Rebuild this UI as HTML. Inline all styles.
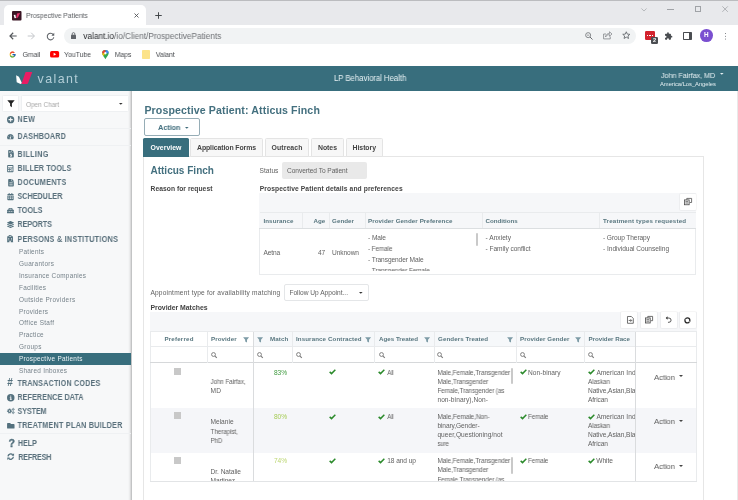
<!DOCTYPE html>
<html lang="en">
<head>
<meta charset="utf-8">
<title>Prospective Patients</title>
<style>
*{box-sizing:border-box;margin:0;padding:0}
html,body{width:738px;height:500px;overflow:hidden;background:#fff}
body{font-family:"Liberation Sans",sans-serif;position:relative;color:#444;font-size:7px}
.a{position:absolute;white-space:nowrap;line-height:1}
.t{will-change:transform}
svg{position:absolute;overflow:visible}
#tabstrip{left:0;top:0;width:738px;height:25px;background:#e8e9ec;border-top:1px solid #bbbcbf}
#tab{left:4px;top:5px;width:142px;height:21px;background:#fff;border-radius:5px 5px 0 0}
#omni{left:64px;top:28px;width:572px;height:16px;background:#f1f3f4;border-radius:8px}
.ct{color:#5f6368;font-size:7.4px;letter-spacing:-.08px;transform:scaleX(.945);transform-origin:0 50%}
</style>
</head>
<body>
<!-- browser chrome -->
<div class="a" id="tabstrip"></div>
<div class="a" id="tab"></div>
<div class="a" id="omni"></div>
<!-- favicon -->
<svg style="left:12px;top:10.5px" width="9.5" height="9.5" viewBox="0 0 20 20"><rect width="20" height="20" rx="2" fill="#3a1524"/><path d="M3.5 8.5 L7 8 L8.5 14.5 L5.5 15.5 Z" fill="#fff"/><path d="M10.5 5 L17 4 L12.5 13.5 L8.8 15 Z" fill="#e6306c"/></svg>
<div class="a t ct" id="tabtitle" style="left:26px;top:11.5px;font-size:7.2px;letter-spacing:-.06px;transform:scaleX(.96);color:#5c5f63">Prospective Patients</div>
<svg style="left:133.5px;top:13px" width="5" height="5" viewBox="0 0 10 10"><path d="M1 1 L9 9 M9 1 L1 9" stroke="#4a4d51" stroke-width="1.7" fill="none"/></svg>
<svg style="left:155px;top:11.5px" width="7" height="7" viewBox="0 0 14 14"><path d="M7 0.5 V13.5 M0.5 7 H13.5" stroke="#3c4043" stroke-width="1.9" fill="none"/></svg>
<!-- window controls -->
<svg style="left:640.5px;top:7.5px" width="6" height="3.6" viewBox="0 0 12 7"><path d="M0.8 0.8 L6 6 L11.2 0.8" stroke="#a5a8ac" stroke-width="1.5" fill="none"/></svg>
<div class="a" style="left:667px;top:8.8px;width:6.5px;height:1px;background:#a0a3a7"></div>
<div class="a" style="left:694.5px;top:6.2px;width:6px;height:5.8px;border:1px solid #a0a3a7"></div>
<svg style="left:721.7px;top:6px" width="6.2" height="6.2" viewBox="0 0 12 12"><path d="M0.7 0.7 L11.3 11.3 M11.3 0.7 L0.7 11.3" stroke="#a0a3a7" stroke-width="1.5" fill="none"/></svg>
<!-- nav buttons -->
<svg style="left:8.8px;top:32px" width="8.4" height="8" viewBox="0 0 16 16"><path d="M15 8 H2 M8 1.5 L1.5 8 L8 14.5" stroke="#55585c" stroke-width="2.3" fill="none"/></svg>
<svg style="left:27.2px;top:32px" width="8.4" height="8" viewBox="0 0 16 16"><path d="M1 8 H14 M8 1.5 L14.5 8 L8 14.5" stroke="#c3c6ca" stroke-width="2" fill="none"/></svg>
<svg style="left:46px;top:31.5px" width="9" height="9" viewBox="0 0 18 18"><path d="M14.5 5.2 A6.6 6.6 0 1 0 15.6 10.5" stroke="#5f6368" stroke-width="2.1" fill="none"/><path d="M16.5 1.5 V7.3 H10.7 Z" fill="#5f6368"/></svg>
<!-- lock -->
<svg style="left:71.3px;top:32px" width="5" height="7" viewBox="0 0 10 14"><rect x="0" y="5.5" width="10" height="8.5" rx="1.2" fill="#5f6368"/><path d="M2.4 6 V3.8 A2.6 2.6 0 0 1 7.6 3.8 V6" stroke="#5f6368" stroke-width="1.7" fill="none"/></svg>
<div class="a t" id="url" style="left:83px;padding-left:.3px;top:32.1px;font-size:8.6px;letter-spacing:-.04px;transform:scaleX(.97);transform-origin:0 50%;color:#6e7175"><span style="color:#2a2c2f">valant.io</span>/io/Client/ProspectivePatients</div>
<!-- omnibox icons -->
<svg style="left:585px;top:31.7px" width="8" height="8" viewBox="0 0 16 16"><circle cx="6.3" cy="6.3" r="5" stroke="#6a6d71" stroke-width="1.6" fill="none"/><path d="M10 10 L15 15" stroke="#6a6d71" stroke-width="2"/><path d="M4 6.3 H8.6" stroke="#6a6d71" stroke-width="1.3"/></svg>
<svg style="left:603px;top:31.3px" width="9.5" height="8.5" viewBox="0 0 19 17"><path d="M6 6 H1.2 V15.8 H14.5 V11" stroke="#7a7d81" stroke-width="1.5" fill="none"/><path d="M5 12 C5.5 7 9 5 13 5 V1.5 L18 6 L13 10.5 V7.3 C9.5 7.3 7 8.5 5 12 Z" stroke="#7a7d81" stroke-width="1.4" fill="none" stroke-linejoin="round"/></svg>
<svg style="left:622.3px;top:31.2px" width="8.6" height="8.4" viewBox="0 0 24 24"><path d="M12 2.2 L14.9 8.9 L22.2 9.5 L16.7 14.3 L18.4 21.4 L12 17.6 L5.6 21.4 L7.3 14.3 L1.8 9.5 L9.1 8.9 Z" stroke="#5f6368" stroke-width="2.4" fill="none" stroke-linejoin="round"/></svg>
<!-- extensions -->
<div class="a" style="left:645px;top:31px;width:10px;height:9.2px;background:#d3232e;border-radius:1.2px"></div>
<div class="a" style="left:647px;top:34.6px;width:6px;height:1.2px;background:repeating-linear-gradient(90deg,#fff 0 1.4px,transparent 1.4px 2.3px)"></div>
<div class="a" style="left:651px;top:36.7px;width:7px;height:7px;background:#4b4e52;border-radius:1.2px;color:#fff;font-size:5.6px;font-weight:bold;text-align:center;line-height:7px;will-change:transform">2</div>
<svg style="left:664px;top:32px" width="9" height="8.4" viewBox="0 0 24 24"><path d="M20.5 11H19V7a2 2 0 0 0-2-2h-4V3.5a2.5 2.5 0 0 0-5 0V5H4a2 2 0 0 0-2 2v3.8h1.5a2.7 2.7 0 0 1 0 5.4H2V20a2 2 0 0 0 2 2h3.8v-1.5a2.7 2.7 0 0 1 5.4 0V22H17a2 2 0 0 0 2-2v-4h1.5a2.5 2.5 0 0 0 0-5z" fill="#4a4d51"/></svg>
<div class="a" style="left:683px;top:32.4px;width:8.8px;height:7.8px;border:1.2px solid #4a4d51;border-right-width:3.6px;border-radius:.8px"></div>
<div class="a" style="left:700px;top:29.3px;width:12.8px;height:12.8px;border-radius:50%;background:#7a4fd0;color:#fff;font-size:6.4px;font-weight:bold;text-align:center;line-height:12.8px;will-change:transform">H</div>
<div class="a" style="left:724.5px;top:32.6px;width:1.6px;height:1.6px;border-radius:50%;background:#5f6368;box-shadow:0 2.7px 0 #5f6368,0 5.4px 0 #5f6368"></div>
<!-- bookmarks -->
<svg style="left:9.3px;top:50.8px" width="7.2" height="7.2" viewBox="0 0 48 48"><path d="M43.6 20.1H42V20H24v8h11.3C33.7 32.7 29.2 36 24 36c-6.6 0-12-5.4-12-12s5.4-12 12-12c3.1 0 5.8 1.2 8 3l5.7-5.7C34 6.1 29.3 4 24 4 13 4 4 13 4 24s9 20 20 20 20-9 20-20c0-1.3-.1-2.7-.4-3.900z" fill="#fbc02d"/><path d="M6.3 14.7l6.6 4.8C14.7 15.100 19 12 24 12c3.100 0 5.8 1.2 8 3l5.7-5.7C34 6.100 29.3 4 24 4 16.3 4 9.7 8.3 6.3 14.7z" fill="#e53935"/><path d="M24 44c5.2 0 9.900-2 13.400-5.2l-6.2-5.2A11.900 11.900 0 0 1 24 36c-5.2 0-9.6-3.3-11.3-7.900l-6.5 5C9.5 39.6 16.2 44 24 44z" fill="#4caf50"/><path d="M43.6 20.100H42V20H24v8h11.3a12 12 0 0 1-4.100 5.6l6.2 5.2C37 39.2 44 34 44 24c0-1.3-.1-2.7-.4-3.900z" fill="#1565c0"/></svg>
<div class="a t ct" id="bm1" style="left:22px;padding-left:.4px;top:50.6px;color:#4a4d51">Gmail</div>
<svg style="left:50px;top:51.4px" width="9.2" height="6.5" viewBox="0 0 28 20"><rect width="28" height="20" rx="5" fill="#f00"/><path d="M11 5.5 L19 10 L11 14.5 Z" fill="#fff"/></svg>
<div class="a t ct" id="bm2" style="left:64px;top:50.6px;color:#4a4d51">YouTube</div>
<svg style="left:101.6px;top:50px" width="6.8" height="9.3" viewBox="0 0 14 20"><path d="M7 0 A7 7 0 0 1 14 7 C14 11.5 9 15 7 20 C5 15 0 11.5 0 7 A7 7 0 0 1 7 0 Z" fill="#34a853"/><path d="M7 0 A7 7 0 0 1 14 7 L7 7 Z" fill="#4285f4"/><path d="M0 7 A7 7 0 0 1 7 0 L7 7 Z" fill="#ea4335"/><path d="M0 7 L7 7 L3 13 C1.5 11 0 9.5 0 7Z" fill="#fbbc04"/><circle cx="7" cy="7" r="2.5" fill="#fff"/></svg>
<div class="a t ct" id="bm3" style="left:114px;padding-left:.7px;top:50.6px;color:#4a4d51">Maps</div>
<div class="a" style="left:142.2px;top:50.3px;width:7.5px;height:8.7px;background:#fce38a;border-radius:.8px"></div>
<div class="a t ct" id="bm4" style="left:155px;padding-left:.8px;top:50.6px;color:#4a4d51">Valant</div>

<!-- app header -->
<div class="a" style="left:0px;top:66px;width:738px;height:25px;background:#386e7d"></div><svg style="left:0;top:66px" width="40" height="25" viewBox="0 66 40 25"><path d="M16.1 75.3 L18.9 76.7 L22 83.3 L20.6 84.1 L16.7 82.3 Z" fill="#fff"/><path d="M25.6 72 L32.3 72 L28 83.2 Q27.7 84 26.8 84 L21.4 84 Z" fill="#ea1c64"/></svg><div class="a t" style="left:37px;top:73px;font-size:12.4px;padding-left:0.6px;letter-spacing:1.42px;color:#b4cfd8">valant</div><div class="a t" style="left:333px;top:75px;font-size:8.2px;padding-left:0.9px;letter-spacing:-0.1px;transform:scaleX(0.968);transform-origin:0 50%;color:#e6f0f3">LP Behavioral Health</div><div class="a t" style="left:660px;top:72px;font-size:7.6px;padding-left:0.9px;letter-spacing:-0.1px;transform:scaleX(0.966);transform-origin:0 50%;color:#e6f0f3">John Fairfax, MD</div><div class="a t" style="left:660px;top:82px;font-size:5.8px;letter-spacing:-0.03px;color:#e6f0f3">America/Los_Angeles</div><svg style="left:719.6px;top:73.2px" width="3.6" height="1.9" viewBox="0 0 8 4"><path d="M0 0 H8 L4 4 Z" fill="#e6f0f3"/></svg>
<!-- sidebar -->
<div class="a" style="left:0px;top:91px;width:132px;height:409px;background:#f7f8f9;box-shadow:inset -4px 0 3px -3px rgba(0,0,0,.32)"></div><div class="a" style="left:2px;top:95px;width:17px;height:17px;background:#fff;border:1px solid #eef0f2;border-radius:1.5px"></div><svg style="left:6.5px;top:100px" width="8" height="7.4" viewBox="0 0 16 15"><path d="M0.5 0.5 H15.5 L9.8 7.2 V14.5 L6.2 12 V7.2 Z" fill="#222"/></svg><div class="a" style="left:21px;top:95px;width:108px;height:17px;background:#fff;border:1px solid #eef0f2;border-radius:1.5px"></div><div class="a t" style="left:25px;top:101px;font-size:7px;padding-left:0.9px;letter-spacing:-0.1px;transform:scaleX(0.944);transform-origin:0 50%;color:#a9a9a9">Open Chart</div><svg style="left:118.6px;top:103px" width="3.6" height="1.9" viewBox="0 0 8 4"><path d="M0 0 H8 L4 4 Z" fill="#333"/></svg><div class="a t" style="left:17px;top:115px;font-size:8.4px;padding-left:0.5px;letter-spacing:0.4px;transform:scaleX(0.86);transform-origin:0 50%;font-weight:bold;color:#586f7b">NEW</div><div class="a t" style="left:17px;top:132px;font-size:8.4px;padding-left:0.5px;letter-spacing:0.24px;transform:scaleX(0.86);transform-origin:0 50%;font-weight:bold;color:#586f7b">DASHBOARD</div><div class="a t" style="left:17px;top:150px;font-size:8.4px;padding-left:0.5px;letter-spacing:0.41px;transform:scaleX(0.86);transform-origin:0 50%;font-weight:bold;color:#586f7b">BILLING</div><div class="a t" style="left:17px;top:164px;font-size:8.4px;padding-left:0.5px;letter-spacing:0.13px;transform:scaleX(0.86);transform-origin:0 50%;font-weight:bold;color:#586f7b">BILLER TOOLS</div><div class="a t" style="left:17px;top:178px;font-size:8.4px;padding-left:0.5px;letter-spacing:0.36px;transform:scaleX(0.86);transform-origin:0 50%;font-weight:bold;color:#586f7b">DOCUMENTS</div><div class="a t" style="left:17px;top:192px;font-size:8.4px;padding-left:0.5px;letter-spacing:0.01px;transform:scaleX(0.86);transform-origin:0 50%;font-weight:bold;color:#586f7b">SCHEDULER</div><div class="a t" style="left:17px;top:206px;font-size:8.4px;padding-left:0.5px;letter-spacing:0.12px;transform:scaleX(0.86);transform-origin:0 50%;font-weight:bold;color:#586f7b">TOOLS</div><div class="a t" style="left:17px;top:220px;font-size:8.4px;padding-left:0.5px;letter-spacing:-0.06px;transform:scaleX(0.86);transform-origin:0 50%;font-weight:bold;color:#586f7b">REPORTS</div><div class="a t" style="left:17px;top:235px;font-size:8.4px;padding-left:0.5px;letter-spacing:0.33px;transform:scaleX(0.86);transform-origin:0 50%;font-weight:bold;color:#586f7b">PERSONS &amp; INSTITUTIONS</div><div class="a t" style="left:17px;top:379px;font-size:8.4px;padding-left:0.5px;letter-spacing:0.21px;transform:scaleX(0.86);transform-origin:0 50%;font-weight:bold;color:#586f7b">TRANSACTION CODES</div><div class="a t" style="left:17px;top:393px;font-size:8.4px;padding-left:0.5px;letter-spacing:0.07px;transform:scaleX(0.86);transform-origin:0 50%;font-weight:bold;color:#586f7b">REFERENCE DATA</div><div class="a t" style="left:17px;top:407px;font-size:8.4px;padding-left:0.5px;letter-spacing:-0.12px;transform:scaleX(0.86);transform-origin:0 50%;font-weight:bold;color:#586f7b">SYSTEM</div><div class="a t" style="left:17px;top:421px;font-size:8.4px;padding-left:0.5px;letter-spacing:0.3px;transform:scaleX(0.86);transform-origin:0 50%;font-weight:bold;color:#586f7b">TREATMENT PLAN BUILDER</div><div class="a t" style="left:17px;top:439px;font-size:8.4px;padding-left:0.9px;letter-spacing:-0.04px;transform:scaleX(0.86);transform-origin:0 50%;font-weight:bold;color:#586f7b">HELP</div><div class="a t" style="left:18px;top:453px;font-size:8.4px;padding-left:0.3px;letter-spacing:-0.26px;transform:scaleX(0.86);transform-origin:0 50%;font-weight:bold;color:#586f7b">REFRESH</div><div class="a" style="left:0px;top:352.5px;width:131px;height:12px;background:#386e7d"></div><div class="a t" style="left:19px;top:249px;font-size:6.4px;letter-spacing:0.27px;color:#76828a">Patients</div><div class="a t" style="left:19px;top:261px;font-size:6.4px;letter-spacing:0.34px;color:#76828a">Guarantors</div><div class="a t" style="left:19px;top:273px;font-size:6.4px;letter-spacing:0.27px;color:#76828a">Insurance Companies</div><div class="a t" style="left:19px;top:285px;font-size:6.4px;letter-spacing:0.24px;color:#76828a">Facilities</div><div class="a t" style="left:19px;top:297px;font-size:6.4px;letter-spacing:0.33px;color:#76828a">Outside Providers</div><div class="a t" style="left:19px;top:309px;font-size:6.4px;letter-spacing:0.25px;color:#76828a">Providers</div><div class="a t" style="left:19px;top:320px;font-size:6.4px;letter-spacing:0.33px;color:#76828a">Office Staff</div><div class="a t" style="left:19px;top:332px;font-size:6.4px;letter-spacing:0.22px;color:#76828a">Practice</div><div class="a t" style="left:19px;top:344px;font-size:6.4px;letter-spacing:0.29px;color:#76828a">Groups</div><div class="a t" style="left:19px;top:356px;font-size:6.4px;letter-spacing:0.27px;color:#eef4f6">Prospective Patients</div><div class="a t" style="left:19px;top:368px;font-size:6.4px;letter-spacing:0.25px;color:#76828a">Shared Inboxes</div><div class="a" style="left:0px;top:128px;width:131px;height:1px;background:#eff1f3"></div><div class="a" style="left:0px;top:145px;width:131px;height:1px;background:#eff1f3"></div><div class="a" style="left:0px;top:433px;width:131px;height:1px;background:#eff1f3"></div><svg style="left:7px;top:115.8px" width="7.3" height="7.3" viewBox="0 0 16 16" fill="#54717e"><path fill-rule="evenodd" d="M8 0a8 8 0 1 0 0 16A8 8 0 0 0 8 0zm4.6 9.2H9.2v3.4H6.8V9.2H3.4V6.8h3.4V3.4h2.4v3.4h3.4z"/></svg><svg style="left:7.3px;top:134.3px" width="6.8" height="5.2" viewBox="0 0 18 14" fill="#54717e"><path fill-rule="evenodd" d="M9 0A9 9 0 0 0 1.2 13.5a1 1 0 0 0 .9.5h13.8a1 1 0 0 0 .9-.5A9 9 0 0 0 9 0zm0 2a1 1 0 1 1 0 2 1 1 0 0 1 0-2zM4 6.5a1 1 0 1 1 0 2 1 1 0 0 1 0-2zm10 0a1 1 0 1 1 0 2 1 1 0 0 1 0-2zM11.6 4.8 10.3 9.3a2 2 0 1 1-1.4-.5l1.3-4.4z"/></svg><svg style="left:7.6px;top:150.1px" width="6" height="7.5" viewBox="0 0 12 16" fill="#54717e"><path fill-rule="evenodd" d="M0 1.5C0 .7.7 0 1.5 0H7v4.2c0 .5.4.8.8.8H12v9.5c0 .8-.7 1.5-1.5 1.5h-9C.700 16 0 15.3 0 14.5zM8 0l4 4H8zM2 2.5h3v1H2zm0 2h3v1H2zm3.4 3v.8c-1 .1-1.7.8-1.7 1.7 0 2 3 1.4 3 2.4 0 .3-.3.5-.8.5-.6 0-1.2-.2-1.7-.6l-.5 1c.4.4 1 .6 1.7.7v.8h1.2v-.8c1-.1 1.8-.8 1.8-1.8 0-2-3-1.5-3-2.4 0-.3.3-.5.7-.5.5 0 1 .2 1.5.5l.5-1c-.4-.3-.9-.5-1.5-.5v-.8z"/></svg><svg style="left:7.2px;top:164.5px" width="6.6" height="7.2" viewBox="0 0 14 16" fill="#54717e"><path fill-rule="evenodd" d="M1.5 0h11A1.5 1.5 0 0 1 14 1.5v13a1.5 1.5 0 0 1-1.5 1.5h-11A1.5 1.5 0 0 1 0 14.5v-13A1.5 1.5 0 0 1 1.5 0zM2 2v3.5h10V2zm0 5.5v2h2.5v-2zm3.8 0v2h2.5v-2zm3.7 0v6.3H12V7.5zM2 11.3v2.5h2.5v-2.5zm3.8 0v2.5h2.5v-2.5z"/></svg><svg style="left:7.6px;top:178.5px" width="6" height="7.5" viewBox="0 0 12 16" fill="#54717e"><path fill-rule="evenodd" d="M0 1.5C0 .7.7 0 1.5 0H7v4.2c0 .5.4.8.8.8H12v9.5c0 .8-.7 1.5-1.5 1.5h-9C.700 16 0 15.3 0 14.5zM8 0l4 4H8zM2.5 7.5v1.2h7V7.5zm0 2.4v1.2h7V9.9zm0 2.4v1.2h7v-1.2z"/></svg><svg style="left:7px;top:193px" width="7" height="7.2" viewBox="0 0 14 16" fill="#54717e"><path fill-rule="evenodd" d="M3 0h2v2h4V0h2v2h1.5A1.5 1.5 0 0 1 14 3.5V5H0V3.5A1.5 1.5 0 0 1 1.5 2H3zM0 6h14v8.5a1.5 1.5 0 0 1-1.5 1.5h-11A1.5 1.5 0 0 1 0 14.5zm2 1.8v2h2.3v-2zm3.8 0v2h2.4v-2zm3.9 0v2H12v-2zM2 11.6v2h2.3v-2zm3.8 0v2h2.4v-2zm3.9 0v2H12v-2z"/></svg><svg style="left:7px;top:208.3px" width="7" height="5.4" viewBox="0 0 16 12" fill="#54717e"><path fill-rule="evenodd" d="M5 0h6a1.5 1.5 0 0 1 1.5 1.5V3h.800a1 1 0 0 1 .7.3l1.7 1.7a1 1 0 0 1 .3.7V7H0V5.7a1 1 0 0 1 .3-.7L2 3.3A1 1 0 0 1 2.7 3h.800V1.5A1.5 1.5 0 0 1 5 0zm.5 1.8V3h5V1.8zM0 8h4.5v1h1.5V8h4v1h1.5V8H16v3a1 1 0 0 1-1 1H1a1 1 0 0 1-1-1z"/></svg><svg style="left:7px;top:221px" width="7" height="7" viewBox="0 0 16 16" fill="#54717e"><path d="M.4 4.5 7.7 7.8a.8.8 0 0 0 .6 0l7.3-3.3a.6.6 0 0 0 0-1.1L8.3.1a.8.8 0 0 0-.6 0L.400 3.4a.6.6 0 0 0 0 1.1zm15.2 3-1.8-.8-5.1 2.3a1.8 1.8 0 0 1-1.4 0L2.2 6.7l-1.8.8a.6.6 0 0 0 0 1.1l7.3 3.3a.8.8 0 0 0 .6 0l7.3-3.3a.6.6 0 0 0 0-1.1zm0 4-1.8-.8-5.1 2.3a1.8 1.8 0 0 1-1.4 0l-5.1-2.3-1.8.8a.6.6 0 0 0 0 1.1l7.3 3.3a.8.8 0 0 0 .6 0l7.3-3.3a.6.6 0 0 0 0-1.1z"/></svg><svg style="left:7.4px;top:235.4px" width="6.2" height="7.2" viewBox="0 0 14 16" fill="#54717e"><path fill-rule="evenodd" d="M4 0h6v2.5h2.5a1 1 0 0 1 1 1V15h.5v1H8.5v-3h-3v3H0v-1h.5V3.5a1 1 0 0 1 1-1H4zm2.3 1v1.2H5.2v1.2h1.1v1.2h1.4V3.4h1.1V2.2H7.7V1zM3 6.5v2h2v-2zm6 0v2h2v-2zM3 10v2h2v-2zm6 0v2h2v-2z"/></svg><div class="a t" style="left:7px;top:378px;font-size:10px;padding-left:0.3px;font-weight:bold;color:#54717e">#</div><div class="a t" style="left:8px;top:438px;font-size:10.6px;padding-left:0.6px;font-weight:bold;color:#54717e;-webkit-text-stroke:.35px #54717e">?</div><svg style="left:7px;top:393.6px" width="7.5" height="7.5" viewBox="0 0 16 16" fill="#54717e"><path fill-rule="evenodd" d="M8 0a8 8 0 1 0 0 16A8 8 0 0 0 8 0zm0 3.2a1.3 1.3 0 1 1 0 2.6 1.3 1.3 0 0 1 0-2.6zM6 7h3.3v4.5h1V13H6v-1.5h1v-3H6z"/></svg><svg style="left:7px;top:408.2px" width="7.8" height="6" viewBox="0 0 20 15.4" fill="none" stroke="#54717e"><circle cx="6.4" cy="7.7" r="3.4" stroke-width="3"/><circle cx="6.4" cy="7.7" r="5.4" stroke-width="2.2" stroke-dasharray="2.5 1.74"/><circle cx="16" cy="3.6" r="1.7" stroke-width="1.8"/><circle cx="16" cy="3.6" r="2.9" stroke-width="1.4" stroke-dasharray="1.4 0.88"/><circle cx="16" cy="11.8" r="1.7" stroke-width="1.8"/><circle cx="16" cy="11.8" r="2.9" stroke-width="1.4" stroke-dasharray="1.4 0.88"/></svg><svg style="left:7px;top:422.6px" width="7.6" height="5.6" viewBox="0 0 16 12" fill="#54717e"><path d="M14.5 2H8.5L6.5 0h-5A1.5 1.5 0 0 0 0 1.5v9A1.5 1.5 0 0 0 1.5 12h13a1.5 1.5 0 0 0 1.5-1.5v-7A1.5 1.5 0 0 0 14.5 2z"/></svg><svg style="left:7px;top:453.4px" width="7.4" height="7.2" viewBox="0 0 16 16" fill="none" stroke="#54717e" stroke-width="2.9"><path d="M2 7.5A6 6 0 0 1 12.5 4"/><path d="M14 8.5A6 6 0 0 1 3.5 12"/><path d="M9.8 6.2H15.5V0.5z" fill="#54717e" stroke="none"/><path d="M6.2 9.8H0.5V15.5z" fill="#54717e" stroke="none"/></svg>
<!-- main -->
<div class="a t" style="left:144px;top:105px;font-size:10.6px;padding-left:0.4px;letter-spacing:0.12px;font-weight:bold;color:#44707f">Prospective Patient: Atticus Finch</div><div class="a" style="left:144px;top:118px;width:56px;height:18px;background:#fff;border:1px solid #96adb6;border-radius:2px"></div><div class="a t" style="left:158px;top:124px;font-size:7.6px;letter-spacing:-0.1px;transform:scaleX(0.969);transform-origin:0 50%;font-weight:bold;color:#44707f">Action</div><svg style="left:185px;top:126.6px" width="3.6" height="1.9" viewBox="0 0 8 4"><path d="M0 0 H8 L4 4 Z" fill="#3f6b7a"/></svg><div class="a" style="left:143px;top:156px;width:561px;height:350px;border:1px solid #e6e6e6;background:#fff"></div><div class="a" style="left:143px;top:138px;width:45.5px;height:19px;background:#386e7d;border-radius:1.5px 1.5px 0 0"></div><div class="a t" style="left:150px;top:145px;font-size:6.9px;padding-left:0.6px;letter-spacing:0.02px;font-weight:bold;color:#fff">Overview</div><div class="a" style="left:190px;top:138px;width:73px;height:19px;background:#f7f7f7;border:1px solid #e4e4e4;border-radius:1.5px 1.5px 0 0"></div><div class="a t" style="left:197px;top:145px;font-size:6.9px;letter-spacing:-0.09px;font-weight:bold;color:#444">Application Forms</div><div class="a" style="left:265px;top:138px;width:44px;height:19px;background:#f7f7f7;border:1px solid #e4e4e4;border-radius:1.5px 1.5px 0 0"></div><div class="a t" style="left:271px;top:145px;font-size:6.9px;padding-left:0.6px;letter-spacing:0.08px;font-weight:bold;color:#444">Outreach</div><div class="a" style="left:311px;top:138px;width:33px;height:19px;background:#f7f7f7;border:1px solid #e4e4e4;border-radius:1.5px 1.5px 0 0"></div><div class="a t" style="left:318px;top:145px;font-size:6.9px;letter-spacing:-0.04px;font-weight:bold;color:#444">Notes</div><div class="a" style="left:346px;top:138px;width:37px;height:19px;background:#f7f7f7;border:1px solid #e4e4e4;border-radius:1.5px 1.5px 0 0"></div><div class="a t" style="left:352px;top:145px;font-size:6.9px;padding-left:0.6px;letter-spacing:-0.06px;font-weight:bold;color:#444">History</div><div class="a t" style="left:150px;top:166px;font-size:10px;padding-left:0.4px;letter-spacing:0.02px;font-weight:bold;color:#44707f">Atticus Finch</div><div class="a t" style="left:259px;top:168px;font-size:6.6px;padding-left:0.6px;letter-spacing:0.02px;color:#626262">Status</div><div class="a" style="left:282px;top:162px;width:85px;height:17px;background:#e9e9e9;border-radius:2px"></div><div class="a t" style="left:287px;top:168px;font-size:6.6px;letter-spacing:-0.05px;color:#626262">Converted To Patient</div><div class="a t" style="left:150px;top:186px;font-size:6.7px;padding-left:0.6px;letter-spacing:0.05px;font-weight:bold;color:#444">Reason for request</div><div class="a t" style="left:259px;top:186px;font-size:6.7px;padding-left:0.8px;letter-spacing:0.1px;font-weight:bold;color:#444">Prospective Patient details and preferences</div><div class="a" style="left:259px;top:193px;width:437px;height:81.5px;background:#fff;border:1px solid #e9ebed"></div><div class="a" style="left:259px;top:193px;width:437px;height:35.5px;background:#f6f7f9;border-bottom:1px solid #dcdfe1"></div><div class="a" style="left:260px;top:212px;width:436px;height:1px;background:#e9ebed"></div><div class="a" style="left:302px;top:213px;width:1px;height:15px;background:#e9ebed"></div><div class="a" style="left:328.5px;top:213px;width:1px;height:15px;background:#e9ebed"></div><div class="a" style="left:364.5px;top:213px;width:1px;height:15px;background:#e9ebed"></div><div class="a" style="left:481.5px;top:213px;width:1px;height:15px;background:#e9ebed"></div><div class="a" style="left:599px;top:213px;width:1px;height:15px;background:#e9ebed"></div><div class="a t" style="left:263px;top:218px;font-size:6.2px;padding-left:0.4px;letter-spacing:0.1px;font-weight:bold;color:#58767f">Insurance</div><div class="a t" style="left:313px;top:218px;font-size:6.2px;padding-left:0.6px;letter-spacing:-0.1px;transform:scaleX(0.974);transform-origin:0 50%;font-weight:bold;color:#58767f">Age</div><div class="a t" style="left:332px;top:218px;font-size:6.2px;letter-spacing:0.07px;font-weight:bold;color:#58767f">Gender</div><div class="a t" style="left:368px;top:218px;font-size:6.2px;letter-spacing:0.09px;font-weight:bold;color:#58767f">Provider Gender Preference</div><div class="a t" style="left:485px;top:218px;font-size:6.2px;padding-left:0.6px;letter-spacing:-0.03px;font-weight:bold;color:#58767f">Conditions</div><div class="a t" style="left:603px;top:218px;font-size:6.2px;letter-spacing:0.18px;font-weight:bold;color:#58767f">Treatment types requested</div><div class="a" style="left:680px;top:194px;width:16px;height:16px;background:#fff;box-shadow:0 0 0 1px rgba(0,0,0,.035);border-radius:1px"></div><svg style="left:683.6px;top:198.4px" width="8" height="7.2" viewBox="0 0 16 14.4" fill="none" stroke="#444" stroke-width="1.5"><path d="M5.5 3.5 V0.8 H15.2 V9 H11.5"/><rect x="0.8" y="3.8" width="9.5" height="9.8" fill="#e4e4e4"/><path d="M3 7 H8 M3 10 H8" stroke-width="1.2"/></svg><div class="a t" style="left:263px;top:250px;font-size:6.6px;padding-left:0.4px;letter-spacing:-0.1px;transform:scaleX(0.986);transform-origin:0 50%;color:#626262">Aetna</div><div class="a t" style="left:318px;top:250px;font-size:6.6px;letter-spacing:-0.1px;transform:scaleX(0.994);transform-origin:0 50%;color:#626262">47</div><div class="a t" style="left:332px;top:250px;font-size:6.6px;letter-spacing:-0.08px;color:#626262">Unknown</div><div class="a t" style="left:368px;top:235px;font-size:6.6px;letter-spacing:-0.07px;color:#626262">- Male</div><div class="a t" style="left:368px;top:246px;font-size:6.6px;letter-spacing:-0.1px;transform:scaleX(0.964);transform-origin:0 50%;color:#626262">- Female</div><div class="a t" style="left:368px;top:257px;font-size:6.6px;letter-spacing:-0.09px;color:#626262">- Transgender Male</div><div class="a t" style="left:368px;top:268px;font-size:6.6px;letter-spacing:-0.1px;transform:scaleX(0.985);transform-origin:0 50%;color:#626262;height:3px;overflow:hidden">- Transgender Female</div><div class="a" style="left:476.2px;top:233px;width:2px;height:13px;background:#c9c9c9;border-radius:1px"></div><div class="a t" style="left:485px;top:235px;font-size:6.6px;padding-left:0.6px;letter-spacing:0.01px;color:#626262">- Anxiety</div><div class="a t" style="left:485px;top:246px;font-size:6.6px;padding-left:0.6px;letter-spacing:-0.05px;color:#626262">- Family conflict</div><div class="a t" style="left:603px;top:235px;font-size:6.6px;letter-spacing:-0.09px;color:#626262">- Group Therapy</div><div class="a t" style="left:603px;top:246px;font-size:6.6px;letter-spacing:-0.03px;color:#626262">- Individual Counseling</div><div class="a t" style="left:150px;top:290px;font-size:6.6px;padding-left:0.4px;letter-spacing:0.2px;color:#626262">Appointment type for availability matching</div><div class="a" style="left:284px;top:284px;width:85px;height:17px;background:#fff;border:1px solid #e4e6e8;border-radius:2px"></div><div class="a t" style="left:289px;top:290px;font-size:6.6px;padding-left:0.4px;color:#626262">Follow Up Appoint...</div><svg style="left:358.6px;top:291.6px" width="3.6" height="1.9" viewBox="0 0 8 4"><path d="M0 0 H8 L4 4 Z" fill="#333"/></svg><div class="a t" style="left:150px;top:305px;font-size:6.9px;padding-left:0.4px;letter-spacing:-0.02px;font-weight:bold;color:#444">Provider Matches</div><div class="a" style="left:150px;top:312px;width:546.5px;height:170.5px;background:#fff;border:1px solid #e9ebed"></div><div class="a" style="left:150px;top:312px;width:546.5px;height:19.5px;background:#f6f7f9"></div><div class="a" style="left:254px;top:331.5px;width:381.5px;height:15px;background:#f6f8fa"></div><div class="a" style="left:150px;top:331px;width:546.5px;height:1px;background:#e9ebed"></div><div class="a" style="left:150px;top:346.3px;width:546.5px;height:1px;background:#e9ebed"></div><div class="a" style="left:151px;top:408px;width:544.5px;height:45px;background:#f5f6f9"></div><div class="a" style="left:150px;top:362px;width:546.5px;height:1px;background:#d6d8da"></div><div class="a" style="left:207px;top:331.5px;width:1px;height:31px;background:#e9ebed"></div><div class="a" style="left:292px;top:331.5px;width:1px;height:31px;background:#e9ebed"></div><div class="a" style="left:374px;top:331.5px;width:1px;height:31px;background:#e9ebed"></div><div class="a" style="left:434px;top:331.5px;width:1px;height:31px;background:#e9ebed"></div><div class="a" style="left:516px;top:331.5px;width:1px;height:31px;background:#e9ebed"></div><div class="a" style="left:584px;top:331.5px;width:1px;height:31px;background:#e9ebed"></div><div class="a t" style="left:164px;top:336px;font-size:6.2px;padding-left:0.4px;letter-spacing:0.19px;font-weight:bold;color:#58767f">Preferred</div><div class="a t" style="left:211px;top:336px;font-size:6.2px;letter-spacing:0.07px;font-weight:bold;color:#58767f">Provider</div><svg style="left:243.4px;top:336.6px" width="6.2" height="5.6" viewBox="0 0 16 14"><path d="M0.3 0.3 H15.7 L10.4 6.6 V13.8 L5.6 11.2 V6.6 Z" fill="#7d9ba6"/></svg><div class="a t" style="left:270px;top:336px;font-size:6.2px;letter-spacing:0.13px;font-weight:bold;color:#58767f">Match</div><svg style="left:256.6px;top:336.6px" width="6.2" height="5.6" viewBox="0 0 16 14"><path d="M0.3 0.3 H15.7 L10.4 6.6 V13.8 L5.6 11.2 V6.6 Z" fill="#7d9ba6"/></svg><div class="a t" style="left:296px;top:336px;font-size:6.2px;letter-spacing:0.1px;font-weight:bold;color:#58767f">Insurance Contracted</div><svg style="left:365.4px;top:336.6px" width="6.2" height="5.6" viewBox="0 0 16 14"><path d="M0.3 0.3 H15.7 L10.4 6.6 V13.8 L5.6 11.2 V6.6 Z" fill="#7d9ba6"/></svg><div class="a t" style="left:379px;top:336px;font-size:6.2px;letter-spacing:0.01px;font-weight:bold;color:#58767f">Ages Treated</div><svg style="left:424.4px;top:336.6px" width="6.2" height="5.6" viewBox="0 0 16 14"><path d="M0.3 0.3 H15.7 L10.4 6.6 V13.8 L5.6 11.2 V6.6 Z" fill="#7d9ba6"/></svg><div class="a t" style="left:438px;top:336px;font-size:6.2px;letter-spacing:0.08px;font-weight:bold;color:#58767f">Genders Treated</div><svg style="left:506.6px;top:336.6px" width="6.2" height="5.6" viewBox="0 0 16 14"><path d="M0.3 0.3 H15.7 L10.4 6.6 V13.8 L5.6 11.2 V6.6 Z" fill="#7d9ba6"/></svg><div class="a t" style="left:520px;top:336px;font-size:6.2px;letter-spacing:0.06px;font-weight:bold;color:#58767f">Provider Gender</div><svg style="left:575px;top:336.6px" width="6.2" height="5.6" viewBox="0 0 16 14"><path d="M0.3 0.3 H15.7 L10.4 6.6 V13.8 L5.6 11.2 V6.6 Z" fill="#7d9ba6"/></svg><div class="a t" style="left:588px;top:336px;font-size:6.2px;padding-left:0.4px;font-weight:bold;color:#58767f">Provider Race</div><svg style="left:211px;top:352px" width="6.2" height="6.2" viewBox="0 0 16 16"><circle cx="6.5" cy="6.5" r="5" stroke="#7c7c7c" stroke-width="2.5" fill="none"/><path d="M10.5 10.5 L15 15" stroke="#7c7c7c" stroke-width="3"/></svg><svg style="left:257.4px;top:352px" width="6.2" height="6.2" viewBox="0 0 16 16"><circle cx="6.5" cy="6.5" r="5" stroke="#7c7c7c" stroke-width="2.5" fill="none"/><path d="M10.5 10.5 L15 15" stroke="#7c7c7c" stroke-width="3"/></svg><svg style="left:296px;top:352px" width="6.2" height="6.2" viewBox="0 0 16 16"><circle cx="6.5" cy="6.5" r="5" stroke="#7c7c7c" stroke-width="2.5" fill="none"/><path d="M10.5 10.5 L15 15" stroke="#7c7c7c" stroke-width="3"/></svg><svg style="left:378.6px;top:352px" width="6.2" height="6.2" viewBox="0 0 16 16"><circle cx="6.5" cy="6.5" r="5" stroke="#7c7c7c" stroke-width="2.5" fill="none"/><path d="M10.5 10.5 L15 15" stroke="#7c7c7c" stroke-width="3"/></svg><svg style="left:437.4px;top:352px" width="6.2" height="6.2" viewBox="0 0 16 16"><circle cx="6.5" cy="6.5" r="5" stroke="#7c7c7c" stroke-width="2.5" fill="none"/><path d="M10.5 10.5 L15 15" stroke="#7c7c7c" stroke-width="3"/></svg><svg style="left:519.6px;top:352px" width="6.2" height="6.2" viewBox="0 0 16 16"><circle cx="6.5" cy="6.5" r="5" stroke="#7c7c7c" stroke-width="2.5" fill="none"/><path d="M10.5 10.5 L15 15" stroke="#7c7c7c" stroke-width="3"/></svg><svg style="left:588px;top:352px" width="6.2" height="6.2" viewBox="0 0 16 16"><circle cx="6.5" cy="6.5" r="5" stroke="#7c7c7c" stroke-width="2.5" fill="none"/><path d="M10.5 10.5 L15 15" stroke="#7c7c7c" stroke-width="3"/></svg><div class="a" style="left:621px;top:312px;width:16px;height:16px;background:#fff;box-shadow:0 0 0 1px rgba(0,0,0,.035);border-radius:1px"></div><div class="a" style="left:641px;top:312px;width:16px;height:16px;background:#fff;box-shadow:0 0 0 1px rgba(0,0,0,.035);border-radius:1px"></div><div class="a" style="left:661px;top:312px;width:16px;height:16px;background:#fff;box-shadow:0 0 0 1px rgba(0,0,0,.035);border-radius:1px"></div><div class="a" style="left:680px;top:312px;width:16px;height:16px;background:#fff;box-shadow:0 0 0 1px rgba(0,0,0,.035);border-radius:1px"></div><svg style="left:626.5px;top:315.9px" width="6.8" height="7.8" viewBox="0 0 14 16" fill="none" stroke="#4a4a4a" stroke-width="1.6"><path d="M1 1 H9 L13 5 V15 H1 Z"/><path d="M3.5 9.2 H9.5 M7.2 6.6 L9.8 9.2 L7.2 11.8" stroke-width="1.6"/></svg><svg style="left:645px;top:316.3px" width="8" height="7.4" viewBox="0 0 16 14.8" fill="none" stroke="#4a4a4a" stroke-width="1.6"><path d="M5.5 3.5 V0.8 H15.2 V9.4 H11.5"/><rect x="0.8" y="3.8" width="9.6" height="10.2" fill="#e4e4e4"/><path d="M3 7.2 H8 M3 10.4 H8" stroke-width="1.3"/></svg><svg style="left:664.9px;top:316.4px" width="6.8" height="6.8" viewBox="0 0 16 16" fill="none" stroke="#3a3a3a" stroke-width="2"><path d="M3 4.8 H9.3 A5 5 0 0 1 9.3 14.8 H7"/><path d="M6 0.8 L1.8 4.8 L6 8.8 Z" fill="#3a3a3a" stroke="none"/></svg><svg style="left:684.3px;top:316.5px;transform:scaleX(-1)" width="6.8" height="6.8" viewBox="0 0 16 16" fill="none" stroke="#2a2a2a" stroke-width="3"><circle cx="8" cy="8" r="5.8"/><path d="M10.5 0.5 L14.8 2.6 L12.2 6.2" stroke-width="1.4" stroke="#fff"/><path d="M5.5 15.5 L1.2 13.4 L3.8 9.8" stroke-width="1.4" stroke="#fff"/></svg><div class="a" style="left:174px;top:368px;width:7px;height:7px;background:#c8c8c8"></div><div class="a t" style="left:210px;top:379px;font-size:6.6px;padding-left:0.5px;letter-spacing:-0.1px;transform:scaleX(0.951);transform-origin:0 50%;color:#626262">John Fairfax,</div><div class="a t" style="left:210px;top:388px;font-size:6.6px;padding-left:0.5px;letter-spacing:0.23px;color:#626262">MD</div><div class="a t" style="left:274px;top:370px;font-size:6.6px;letter-spacing:-0.1px;transform:scaleX(0.969);transform-origin:0 50%;color:#3f9a3f">83%</div><svg style="left:329px;top:369.4px" width="7" height="5.4" viewBox="0 0 14 11"><path d="M1.2 5.8 L5 9.4 L12.8 1.4" stroke="#2b8a2b" stroke-width="3" fill="none"/></svg><svg style="left:378.4px;top:369.4px" width="7" height="5.4" viewBox="0 0 14 11"><path d="M1.2 5.8 L5 9.4 L12.8 1.4" stroke="#2b8a2b" stroke-width="3" fill="none"/></svg><div class="a t" style="left:387px;top:370px;font-size:6.6px;padding-left:0.2px;letter-spacing:-0.1px;transform:scaleX(0.898);transform-origin:0 50%;color:#626262">All</div><div class="a t" style="left:437px;top:370px;font-size:6.6px;padding-left:0.4px;letter-spacing:-0.1px;transform:scaleX(0.975);transform-origin:0 50%;color:#626262">Male,Female,Transgender</div><div class="a t" style="left:437px;top:379px;font-size:6.6px;padding-left:0.4px;letter-spacing:-0.1px;transform:scaleX(0.985);transform-origin:0 50%;color:#626262">Male,Transgender</div><div class="a t" style="left:437px;top:388px;font-size:6.6px;padding-left:0.4px;letter-spacing:-0.1px;transform:scaleX(0.959);transform-origin:0 50%;color:#626262">Female,Transgender (as</div><div class="a t" style="left:437px;top:397px;font-size:6.6px;padding-left:0.4px;letter-spacing:0.07px;color:#626262">non-binary),Non-</div><svg style="left:519.6px;top:369.4px" width="7" height="5.4" viewBox="0 0 14 11"><path d="M1.2 5.8 L5 9.4 L12.8 1.4" stroke="#2b8a2b" stroke-width="3" fill="none"/></svg><div class="a t" style="left:528px;top:370px;font-size:6.6px;letter-spacing:0.04px;color:#626262">Non-binary</div><svg style="left:588px;top:369.4px" width="7" height="5.4" viewBox="0 0 14 11"><path d="M1.2 5.8 L5 9.4 L12.8 1.4" stroke="#2b8a2b" stroke-width="3" fill="none"/></svg><div class="a t" style="left:596px;top:370px;font-size:6.6px;padding-left:0.4px;letter-spacing:0.03px;color:#626262">American Indian,</div><div class="a t" style="left:588px;top:379px;font-size:6.6px;letter-spacing:-0.1px;transform:scaleX(0.962);transform-origin:0 50%;color:#626262">Alaskan</div><div class="a t" style="left:588px;top:388px;font-size:6.6px;letter-spacing:-0.06px;color:#626262">Native,Asian,Black or</div><div class="a t" style="left:588px;top:397px;font-size:6.6px;letter-spacing:-0.09px;color:#626262">African</div><div class="a" style="left:174px;top:412px;width:7px;height:7px;background:#c8c8c8"></div><div class="a t" style="left:210px;top:419px;font-size:6.6px;padding-left:0.5px;color:#626262">Melanie</div><div class="a t" style="left:210px;top:429px;font-size:6.6px;padding-left:0.5px;letter-spacing:-0.1px;transform:scaleX(0.967);transform-origin:0 50%;color:#626262">Therapist,</div><div class="a t" style="left:210px;top:438px;font-size:6.6px;padding-left:0.5px;letter-spacing:-0.1px;transform:scaleX(0.942);transform-origin:0 50%;color:#626262">PhD</div><div class="a t" style="left:274px;top:414px;font-size:6.6px;letter-spacing:-0.1px;transform:scaleX(0.969);transform-origin:0 50%;color:#a6cc55">80%</div><svg style="left:329px;top:413.8px" width="7" height="5.4" viewBox="0 0 14 11"><path d="M1.2 5.8 L5 9.4 L12.8 1.4" stroke="#2b8a2b" stroke-width="3" fill="none"/></svg><svg style="left:378.4px;top:413.8px" width="7" height="5.4" viewBox="0 0 14 11"><path d="M1.2 5.8 L5 9.4 L12.8 1.4" stroke="#2b8a2b" stroke-width="3" fill="none"/></svg><div class="a t" style="left:387px;top:414px;font-size:6.6px;padding-left:0.2px;letter-spacing:-0.1px;transform:scaleX(0.898);transform-origin:0 50%;color:#626262">All</div><div class="a t" style="left:437px;top:414px;font-size:6.6px;padding-left:0.4px;letter-spacing:-0.1px;transform:scaleX(0.99);transform-origin:0 50%;color:#626262">Male,Female,Non-</div><div class="a t" style="left:437px;top:423px;font-size:6.6px;padding-left:0.4px;letter-spacing:-0.1px;transform:scaleX(0.995);transform-origin:0 50%;color:#626262">binary,Gender-</div><div class="a t" style="left:437px;top:432px;font-size:6.6px;padding-left:0.4px;letter-spacing:0.03px;color:#626262">queer,Questioning/not</div><div class="a t" style="left:437px;top:441px;font-size:6.6px;padding-left:0.4px;letter-spacing:-0.1px;transform:scaleX(0.926);transform-origin:0 50%;color:#626262">sure</div><svg style="left:519.6px;top:413.8px" width="7" height="5.4" viewBox="0 0 14 11"><path d="M1.2 5.8 L5 9.4 L12.8 1.4" stroke="#2b8a2b" stroke-width="3" fill="none"/></svg><div class="a t" style="left:528px;top:414px;font-size:6.6px;letter-spacing:-0.1px;transform:scaleX(0.949);transform-origin:0 50%;color:#626262">Female</div><svg style="left:588px;top:413.8px" width="7" height="5.4" viewBox="0 0 14 11"><path d="M1.2 5.8 L5 9.4 L12.8 1.4" stroke="#2b8a2b" stroke-width="3" fill="none"/></svg><div class="a t" style="left:596px;top:414px;font-size:6.6px;padding-left:0.4px;letter-spacing:0.03px;color:#626262">American Indian,</div><div class="a t" style="left:588px;top:423px;font-size:6.6px;letter-spacing:-0.1px;transform:scaleX(0.962);transform-origin:0 50%;color:#626262">Alaskan</div><div class="a t" style="left:588px;top:432px;font-size:6.6px;letter-spacing:-0.06px;color:#626262">Native,Asian,Black or</div><div class="a t" style="left:588px;top:441px;font-size:6.6px;letter-spacing:-0.09px;color:#626262">African</div><div class="a" style="left:174px;top:457px;width:7px;height:7px;background:#c8c8c8"></div><div class="a t" style="left:210px;top:469px;font-size:6.6px;padding-left:0.5px;letter-spacing:-0.03px;color:#626262">Dr. Natalie</div><div class="a t" style="left:210px;top:478px;font-size:6.6px;padding-left:0.5px;letter-spacing:-0.1px;transform:scaleX(0.996);transform-origin:0 50%;color:#626262">Martinez</div><div class="a t" style="left:274px;top:458px;font-size:6.6px;letter-spacing:-0.1px;transform:scaleX(0.969);transform-origin:0 50%;color:#bcd672">74%</div><svg style="left:329px;top:458.2px" width="7" height="5.4" viewBox="0 0 14 11"><path d="M1.2 5.8 L5 9.4 L12.8 1.4" stroke="#2b8a2b" stroke-width="3" fill="none"/></svg><svg style="left:378.4px;top:458.2px" width="7" height="5.4" viewBox="0 0 14 11"><path d="M1.2 5.8 L5 9.4 L12.8 1.4" stroke="#2b8a2b" stroke-width="3" fill="none"/></svg><div class="a t" style="left:387px;top:458px;font-size:6.6px;padding-left:0.2px;letter-spacing:-0.07px;color:#626262">18 and up</div><div class="a t" style="left:437px;top:458px;font-size:6.6px;padding-left:0.4px;letter-spacing:-0.1px;transform:scaleX(0.975);transform-origin:0 50%;color:#626262">Male,Female,Transgender</div><div class="a t" style="left:437px;top:467px;font-size:6.6px;padding-left:0.4px;letter-spacing:-0.1px;transform:scaleX(0.985);transform-origin:0 50%;color:#626262">Male,Transgender</div><div class="a t" style="left:437px;top:477px;font-size:6.6px;padding-left:0.4px;letter-spacing:-0.1px;transform:scaleX(0.959);transform-origin:0 50%;color:#626262">Female,Transgender (as</div><svg style="left:519.6px;top:458.2px" width="7" height="5.4" viewBox="0 0 14 11"><path d="M1.2 5.8 L5 9.4 L12.8 1.4" stroke="#2b8a2b" stroke-width="3" fill="none"/></svg><div class="a t" style="left:528px;top:458px;font-size:6.6px;letter-spacing:-0.1px;transform:scaleX(0.944);transform-origin:0 50%;color:#626262">Female</div><svg style="left:588px;top:458.2px" width="7" height="5.4" viewBox="0 0 14 11"><path d="M1.2 5.8 L5 9.4 L12.8 1.4" stroke="#2b8a2b" stroke-width="3" fill="none"/></svg><div class="a t" style="left:596px;top:458px;font-size:6.6px;padding-left:0.3px;letter-spacing:-0.04px;color:#626262">White</div><div class="a" style="left:511.2px;top:367.6px;width:1.8px;height:16.4px;background:#c9c9c9;border-radius:1px"></div><div class="a" style="left:511.2px;top:457.3px;width:1.8px;height:16.4px;background:#c9c9c9;border-radius:1px"></div><div class="a" style="left:635.4px;top:331.5px;width:60.6px;height:31px;background:#fff"></div><div class="a" style="left:635.4px;top:363.6px;width:60.6px;height:45px;background:#fff"></div><div class="a" style="left:635.4px;top:408px;width:60.6px;height:45px;background:#f5f6f9"></div><div class="a" style="left:635.4px;top:453.4px;width:60.6px;height:28.5px;background:#fff"></div><div class="a" style="left:636px;top:346.3px;width:60px;height:1px;background:#e9ebed"></div><div class="a" style="left:636px;top:362px;width:60px;height:1px;background:#d6d8da"></div><div class="a" style="left:635px;top:331.5px;width:1px;height:150.5px;background:#dadcde"></div><div class="a" style="left:253px;top:331.5px;width:1px;height:150.5px;background:#dadcde"></div><div class="a t" style="left:654px;top:374px;font-size:8.1px;letter-spacing:-0.1px;transform:scaleX(0.955);transform-origin:0 50%;color:#5e5e5e">Action</div><svg style="left:679px;top:375.3px" width="4" height="2.1" viewBox="0 0 8 4"><path d="M0 0 H8 L4 4 Z" fill="#444"/></svg><div class="a t" style="left:654px;top:418px;font-size:8.1px;letter-spacing:-0.1px;transform:scaleX(0.955);transform-origin:0 50%;color:#5e5e5e">Action</div><svg style="left:679px;top:419.9px" width="4" height="2.1" viewBox="0 0 8 4"><path d="M0 0 H8 L4 4 Z" fill="#444"/></svg><div class="a t" style="left:654px;top:463px;font-size:8.1px;letter-spacing:-0.1px;transform:scaleX(0.955);transform-origin:0 50%;color:#5e5e5e">Action</div><svg style="left:679px;top:464.6px" width="4" height="2.1" viewBox="0 0 8 4"><path d="M0 0 H8 L4 4 Z" fill="#444"/></svg><div class="a" style="left:150px;top:482px;width:547px;height:10px;background:#fff"></div><div class="a" style="left:150px;top:481px;width:546.5px;height:1px;background:#e2e4e6"></div><div class="a" style="left:737px;top:91px;width:1px;height:409px;background:#e9e9e9"></div>
</body>
</html>
